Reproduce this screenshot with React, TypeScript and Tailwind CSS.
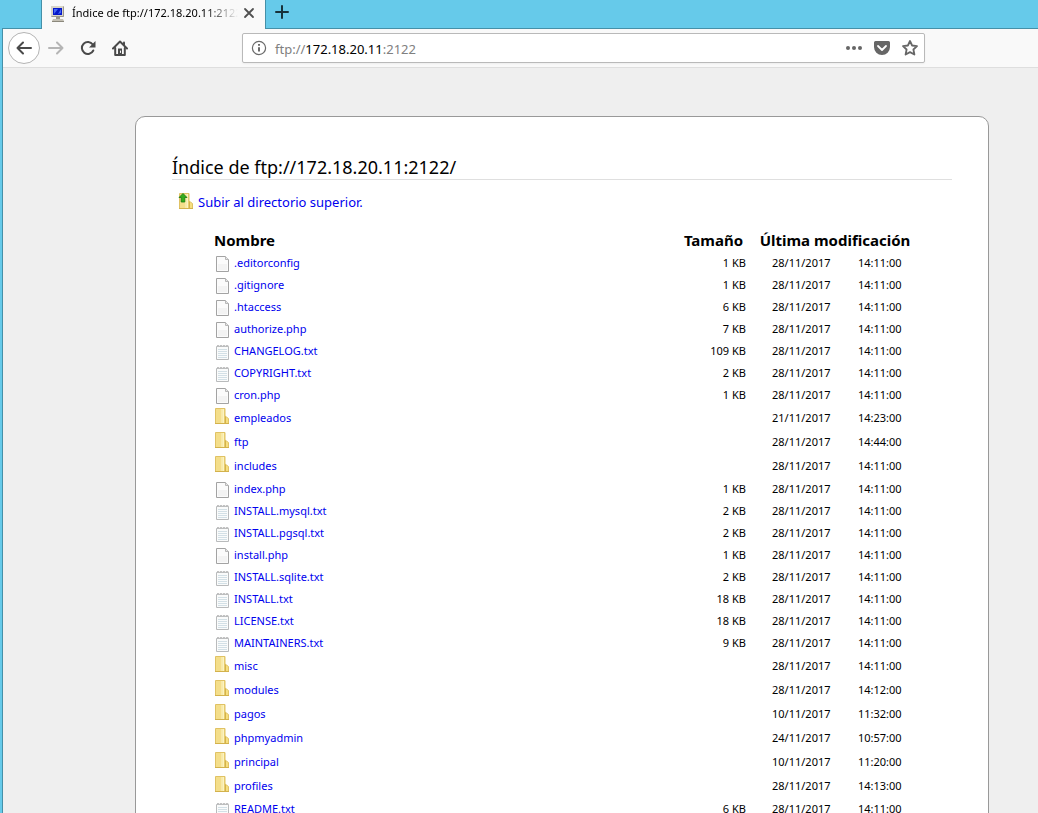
import React from "react";

type Kind = "file" | "text" | "dir";
type Entry = { name: string; kind: Kind; size?: string; date: string; time: string };

const entries: Entry[] = [
  { name: ".editorconfig", kind: "file", size: "1 KB", date: "28/11/2017", time: "14:11:00" },
  { name: ".gitignore", kind: "file", size: "1 KB", date: "28/11/2017", time: "14:11:00" },
  { name: ".htaccess", kind: "file", size: "6 KB", date: "28/11/2017", time: "14:11:00" },
  { name: "authorize.php", kind: "file", size: "7 KB", date: "28/11/2017", time: "14:11:00" },
  { name: "CHANGELOG.txt", kind: "text", size: "109 KB", date: "28/11/2017", time: "14:11:00" },
  { name: "COPYRIGHT.txt", kind: "text", size: "2 KB", date: "28/11/2017", time: "14:11:00" },
  { name: "cron.php", kind: "file", size: "1 KB", date: "28/11/2017", time: "14:11:00" },
  { name: "empleados", kind: "dir", date: "21/11/2017", time: "14:23:00" },
  { name: "ftp", kind: "dir", date: "28/11/2017", time: "14:44:00" },
  { name: "includes", kind: "dir", date: "28/11/2017", time: "14:11:00" },
  { name: "index.php", kind: "file", size: "1 KB", date: "28/11/2017", time: "14:11:00" },
  { name: "INSTALL.mysql.txt", kind: "text", size: "2 KB", date: "28/11/2017", time: "14:11:00" },
  { name: "INSTALL.pgsql.txt", kind: "text", size: "2 KB", date: "28/11/2017", time: "14:11:00" },
  { name: "install.php", kind: "file", size: "1 KB", date: "28/11/2017", time: "14:11:00" },
  { name: "INSTALL.sqlite.txt", kind: "text", size: "2 KB", date: "28/11/2017", time: "14:11:00" },
  { name: "INSTALL.txt", kind: "text", size: "18 KB", date: "28/11/2017", time: "14:11:00" },
  { name: "LICENSE.txt", kind: "text", size: "18 KB", date: "28/11/2017", time: "14:11:00" },
  { name: "MAINTAINERS.txt", kind: "text", size: "9 KB", date: "28/11/2017", time: "14:11:00" },
  { name: "misc", kind: "dir", date: "28/11/2017", time: "14:11:00" },
  { name: "modules", kind: "dir", date: "28/11/2017", time: "14:12:00" },
  { name: "pagos", kind: "dir", date: "10/11/2017", time: "11:32:00" },
  { name: "phpmyadmin", kind: "dir", date: "24/11/2017", time: "10:57:00" },
  { name: "principal", kind: "dir", date: "10/11/2017", time: "11:20:00" },
  { name: "profiles", kind: "dir", date: "28/11/2017", time: "14:13:00" },
  { name: "README.txt", kind: "text", size: "6 KB", date: "28/11/2017", time: "14:11:00" },
];

function FolderShape() {
  return (
    <>
      <path d="M1.500 .5h9.500v7.500l3.500 2.500v5h-13z" fill="#f3dc80" stroke="#e0c264" />
      <path d="M2 1h5v14H2z" fill="#f4de8a" />
      <path d="M7 1h1.500v14H7z" fill="#f8e9a8" />
      <path d="M8.500 1h1.500v14H8.500z" fill="#fcf3c2" />
      <path d="M10 1h1v14h-1z" fill="#e6cb6c" />
      <path d="M11.500 8.500v6.500" stroke="#d4b24a" />
      <path d="M12 9.500l2 1.500v4h-2z" fill="#f6df80" />
      <path d="M1 15.500h14" stroke="#d3b24c" />
    </>
  );
}

function EntryIcon({ kind }: { kind: Kind }) {
  if (kind === "dir") {
    return (
      <svg className="mb-1 size-4 shrink-0" viewBox="0 0 16 16" aria-hidden="true">
        <FolderShape />
      </svg>
    );
  }
  if (kind === "text") {
    return (
      <svg className="mt-[2px] size-4 shrink-0" viewBox="0 0 16 16" aria-hidden="true">
        <path d="M2.500 2.500h12v13h-12z" fill="#fafbfb" stroke="#b9bbbc" />
        <path d="M4 5.500h9M4 7.500h9M4 9.500h9M4 11.500h9M4 13.500h9" stroke="#d3e0e6" />
        <path d="M3 1.500h2v1.500M6 1.500h2v1.500M9 1.500h2v1.500M12 1.500h2v1.500" fill="none" stroke="#c2c2c2" />
      </svg>
    );
  }
  return (
    <svg className="mt-[2px] size-4 shrink-0" viewBox="0 0 16 16" aria-hidden="true">
      <path d="M2.500 .5h9l3 3v12h-12z" fill="#fbfbfb" stroke="#a3a3a3" />
      <path d="M4 8h9v6H4z" fill="#f3f3f3" />
      <path d="M11.500 .5v3h3" fill="#e6e6e6" stroke="#b8b8b8" />
    </svg>
  );
}

function TabStrip() {
  return (
    <div className="flex h-7 bg-[#66caea] pl-[41px]">
      <div className="z-10 -mb-px flex w-[225px] items-center border-x border-[#4590a8] bg-[#f9f9f9] pr-2 pl-2">
        <svg className="mb-[2px] size-4 shrink-0" viewBox="0 0 16 16" aria-hidden="true">
          <path d="M1 0h13v11H1z" fill="#d8d4c8" />
          <path d="M1.500 10.500h12v-10" fill="none" stroke="#9c988c" />
          <path d="M3 2h9v7H3z" fill="#0718c9" />
          <path d="M4 3h4l-4 5zM8 8l3-5v4z" fill="#4668f5" />
          <path d="M6 11h4v2H6z" fill="#9b978c" />
          <path d="M3 13h10l1 2H2z" fill="#c4c0b4" />
          <path d="M2 15.500h12" stroke="#8b887c" />
        </svg>
        <span className="mb-[3px] ml-[6px] w-[166px] overflow-hidden mask-r-from-80% text-[11px] leading-5 whitespace-nowrap text-black">
          Índice de ftp://172.18.20.11:2122/
        </span>
        <button type="button" aria-label="Cerrar pestaña" className="mb-[3px] ml-auto">
          <svg className="size-4" viewBox="0 0 16 16" fill="none" stroke="#505050" strokeWidth="1.800" strokeLinecap="round" aria-hidden="true">
            <path d="M4 4l8 8M12 4l-8 8" />
          </svg>
        </button>
      </div>
      <button type="button" aria-label="Nueva pestaña" className="mb-1 ml-2">
        <svg className="size-4" viewBox="0 0 16 16" fill="none" stroke="#17323b" strokeWidth="2" strokeLinecap="round" aria-hidden="true">
          <path d="M8 2v12M2 8h12" />
        </svg>
      </button>
    </div>
  );
}

function Toolbar() {
  return (
    <nav className="flex h-[39px] items-center border-b border-[#dedede] bg-[#f9f9f9] pl-[5px]" aria-label="Navegación">
      <button type="button" aria-label="Atrás" className="flex size-8 items-center justify-center rounded-full border border-[#b4b4b4] bg-white">
        <svg className="size-4" viewBox="0 0 16 16" fill="none" stroke="#4a4a4a" strokeWidth="2" strokeLinecap="round" strokeLinejoin="round" aria-hidden="true">
          <path d="M15 8H1.500M7 2.500L1.500 8L7 13.500" />
        </svg>
      </button>
      <button type="button" aria-label="Adelante" disabled className="ml-2">
        <svg className="size-4" viewBox="0 0 16 16" fill="none" stroke="#b5b5b5" strokeWidth="2" strokeLinecap="round" strokeLinejoin="round" aria-hidden="true">
          <path d="M1 8h13.500M9 2.500L14.500 8L9 13.500" />
        </svg>
      </button>
      <button type="button" aria-label="Recargar" className="ml-4">
        <svg className="size-4" viewBox="0 0 16 16" fill="none" stroke="#4a4a4a" strokeWidth="2" strokeLinecap="round" aria-hidden="true">
          <path d="M12.800 4.500A6 6 0 1 0 13.300 10.500" />
          <path d="M15.500 1v6.500H9z" fill="#4a4a4a" stroke="none" />
        </svg>
      </button>
      <button type="button" aria-label="Inicio" className="ml-4">
        <svg className="size-4" viewBox="0 0 16 16" fill="none" stroke="#4a4a4a" strokeWidth="2" strokeLinecap="round" strokeLinejoin="round" aria-hidden="true">
          <path d="M1 8.500L8 1.500L15 8.500" />
          <path d="M3.200 8v7h9.600V8" />
          <path d="M6 8.500h4V15H6z" fill="#4a4a4a" stroke="none" />
          <path d="M8.500 11v1.500" stroke="#f9f9f9" strokeWidth="1" />
          <path d="M12 2.500v2" />
        </svg>
      </button>
      <div className="mr-[113px] ml-[114px] flex h-[30px] min-w-0 flex-1 items-center rounded-[2px] border border-[#b9b9b9] bg-white pr-[6px] pl-2 shadow-xs">
        <svg className="size-4 shrink-0" viewBox="0 0 16 16" fill="none" stroke="#6a6a6a" aria-hidden="true">
          <circle cx="8" cy="8" r="6.600" strokeWidth="1.200" />
          <path d="M8 7.200v4.300M8 4v1.800" strokeWidth="2" />
        </svg>
        <div role="textbox" aria-label="Dirección" className="mt-px ml-2 flex-1 text-[13px] leading-5 text-[#808080]">
          ftp://<span className="text-black">172.18.20.11</span>:2122
        </div>
        <div className="flex items-center gap-3">
          <button type="button" aria-label="Acciones de página">
            <svg className="size-4" viewBox="0 0 16 16" fill="#666" aria-hidden="true">
              <circle cx="2" cy="8" r="2" />
              <circle cx="8" cy="8" r="2" />
              <circle cx="14" cy="8" r="2" />
            </svg>
          </button>
          <button type="button" aria-label="Guardar en Pocket">
            <svg className="size-4" viewBox="0 0 16 16" aria-hidden="true">
              <path d="M1.500 1h13A1.500 1.500 0 0 1 16 2.500V7a8 8 0 0 1-16 0V2.500A1.500 1.500 0 0 1 1.500 1z" fill="#666" />
              <path d="M4 6l4 4l4-4" fill="none" stroke="#fff" strokeWidth="1.800" strokeLinecap="round" strokeLinejoin="round" />
            </svg>
          </button>
          <button type="button" aria-label="Añadir a marcadores">
            <svg className="size-4" viewBox="0 0 16 16" fill="none" stroke="#666" strokeWidth="1.800" strokeLinejoin="round" aria-hidden="true">
              <path d="M8 1l2.100 4.500 4.900.6-3.600 3.400 1 5L8 12.100l-4.400 2.400 1-5L1 6.100l4.900-.6z" />
            </svg>
          </button>
        </div>
      </div>
    </nav>
  );
}

export default function App() {
  return (
    <div className="flex h-screen flex-col overflow-hidden bg-[#66caea] font-['Noto_Sans',sans-serif] text-black">
      <TabStrip />
      <div className="ml-[2px] flex min-h-0 flex-1 flex-col border-t border-l border-[#4590a8]">
        <Toolbar />
        <main className="min-h-0 flex-1 overflow-hidden bg-[#efefef] pt-12 pr-[49px] pl-[132px]">
          <div className="rounded-[10px] border border-[#999] bg-white px-9 pt-[38px] pb-9">
            <h1 className="border-b border-[#dfdfdf] text-[18px] leading-6">Índice de ftp://172.18.20.11:2122/</h1>
            <p className="mt-[10px] flex h-6 items-center pl-[6px] text-[13px] leading-5">
              <a href="#superior" className="flex items-center gap-1 text-[#0000ee]">
                <svg className="mb-[3px] size-4 shrink-0" viewBox="0 0 16 16" aria-hidden="true">
                  <FolderShape />
                  <path d="M5 .5l4 4H6.800v4.500H3.200V4.500H1z" fill="#35ad1c" stroke="#157a10" strokeWidth=".8" />
                </svg>
                Subir al directorio superior.
              </a>
            </p>
            <table className="mt-[14px] mr-10 ml-[42px] w-[calc(100%-82px)] table-fixed text-[11px] leading-4">
              <colgroup>
                <col />
                <col className="w-[65px]" />
                <col className="w-[90px]" />
                <col className="w-[76px]" />
              </colgroup>
              <thead>
                <tr className="h-6 text-[15px] leading-5">
                  <th scope="col" className="p-0 pb-px text-left">Nombre</th>
                  <th scope="col" className="p-0 pb-px text-center">Tamaño</th>
                  <th scope="col" colSpan={2} className="p-0 pb-px pl-3 text-center whitespace-nowrap">Última modificación</th>
                </tr>
              </thead>
              <tbody>
                {entries.map((e) => (
                  <tr key={e.name} className={e.kind === "dir" ? "h-6" : "h-[22px]"}>
                    <td className="p-0">
                      <a href={"#" + e.name} className="flex items-center gap-1 text-[#0000ee]">
                        <EntryIcon kind={e.kind} />
                        {e.name}
                      </a>
                    </td>
                    <td className="p-0 text-right">{e.size}</td>
                    <td className="p-0 pl-[26px]">{e.date}</td>
                    <td className="p-0 pl-[22px]">{e.time}</td>
                  </tr>
                ))}
              </tbody>
            </table>
          </div>
        </main>
      </div>
    </div>
  );
}
